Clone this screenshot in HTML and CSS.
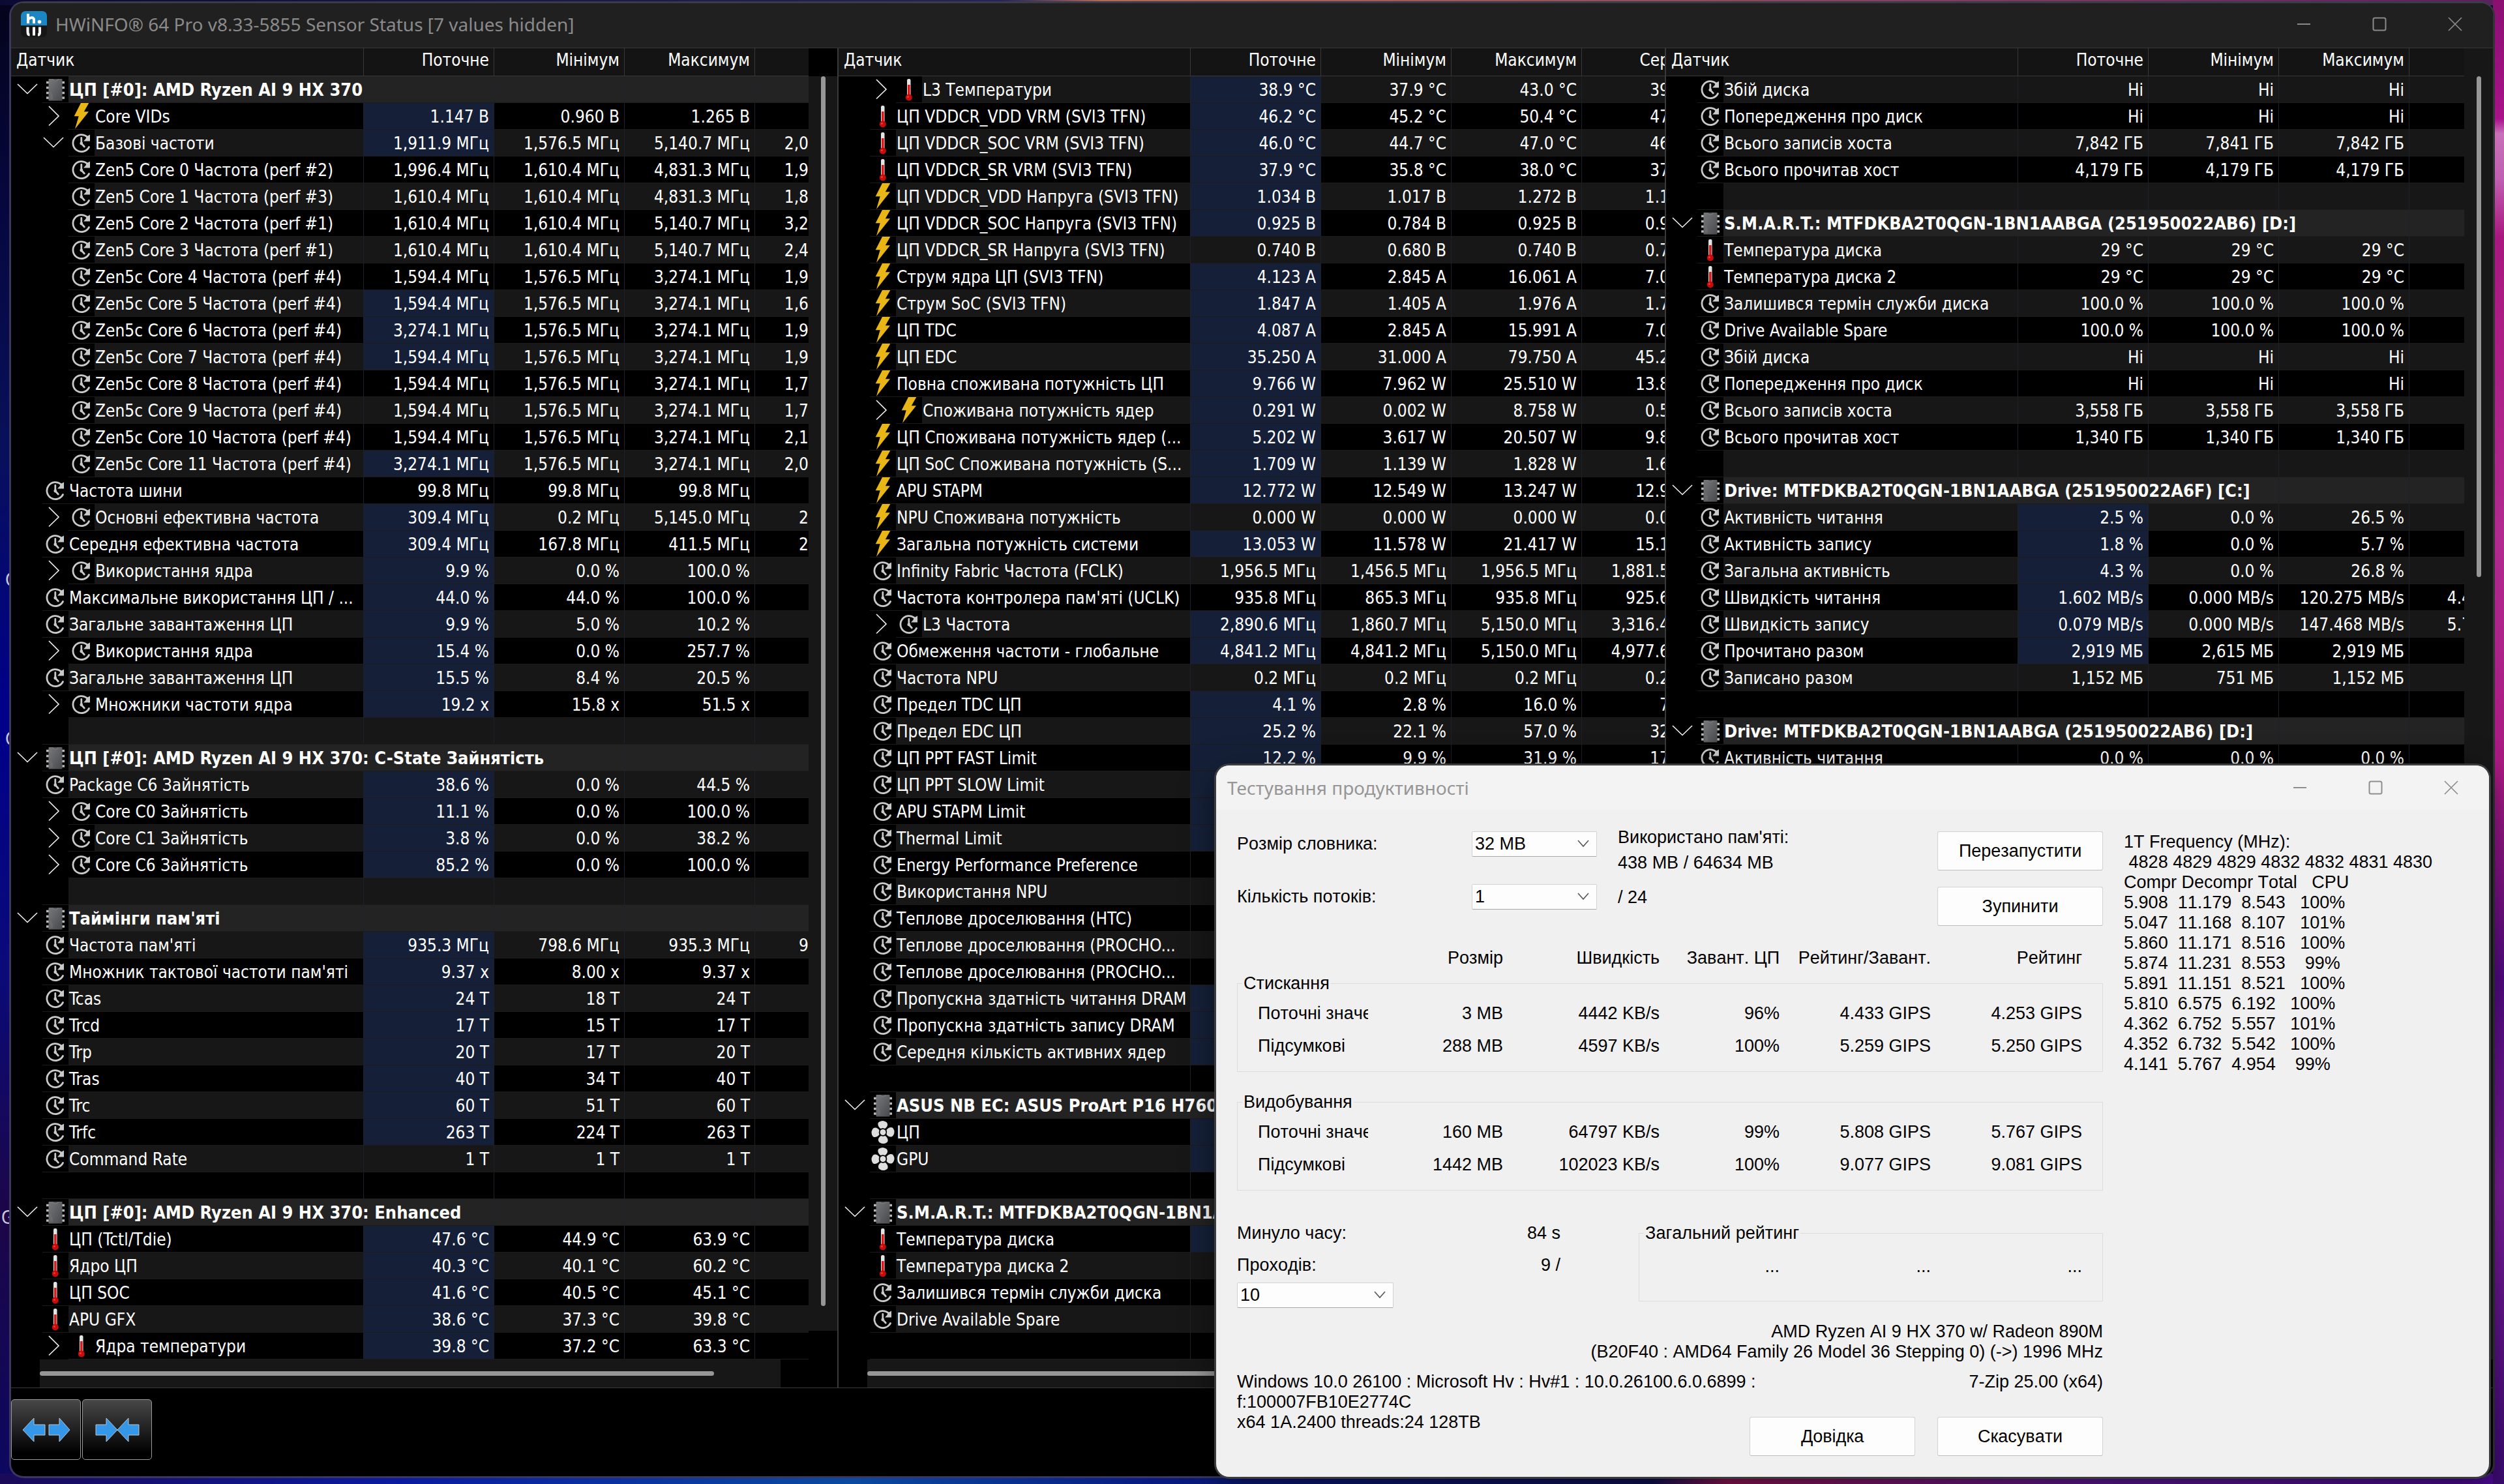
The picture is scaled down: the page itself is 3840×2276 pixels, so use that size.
FILE: index.html
```html
<!DOCTYPE html>
<html lang="uk">
<head>
<meta charset="utf-8">
<title>HWiNFO® 64 Pro</title>
<link rel="stylesheet" href="styles.css">
</head>
<body>
<svg class="sprite" aria-hidden="true">
  <defs>
    <linearGradient id="chip-body" x1="0" y1="0" x2="1" y2="1">
      <stop offset="0" stop-color="#77787b"/><stop offset="1" stop-color="#48494c"/>
    </linearGradient>
  </defs>
  <symbol id="clock" viewBox="0 0 40 40">
    <path d="M28.500 10.800A13 13 0 1 0 31.500 26.500" fill="none" stroke="#c9c9c9" stroke-width="2.800" stroke-linecap="round"/>
    <path d="M33 7.500v10h-10l3.500-3.800 1-3.200z" fill="#c9c9c9"/>
    <path d="M19.800 12.500V21l4.500 5" fill="none" stroke="#c9c9c9" stroke-width="2.800" stroke-linecap="round"/>
    <circle cx="19.800" cy="21" r="2.400" fill="#c9c9c9"/>
  </symbol>
  <symbol id="chip" viewBox="0 0 40 40">
    <path d="M6 9.500h28M6 17.500h28M6 25.500h28M6 33h28" stroke="#b9b9b9" stroke-width="3.600"/>
    <rect x="9.500" y="4" width="21" height="33.500" rx="1" fill="url(#chip-body)"/>
    <path d="M16 4a4 3 0 0 0 8 0" fill="#5a5a5c" stroke="#8c8c8c" stroke-width=".7"/>
    <path d="M13 24v11M15 28v7" stroke="#7b7b7e" stroke-width=".7"/>
  </symbol>
  <symbol id="bolt" viewBox="0 0 40 40">
    <path d="M19 0h12.300l-7.500 13.300h7.200L10 39.700l5.700-19.400h-7z" fill="#e9b616"/>
  </symbol>
  <symbol id="temp" viewBox="0 0 40 40">
    <rect x="17" y="4" width="5.500" height="26" rx="2.200" fill="#e4e4e4"/>
    <rect x="18" y="13" width="3.600" height="18" fill="#e01818"/>
    <circle cx="19.800" cy="32.500" r="5" fill="#c80c0c"/>
    <circle cx="18.400" cy="31.500" r="1.500" fill="#ef3a3a"/>
  </symbol>
  <symbol id="fan" viewBox="0 0 40 40">
    <g fill="#dedede">
      <path id="blade" d="M16.500 15C12 12 11 6 14.500 4.500q5-3 10 0C29 7 27 13 23 15q-3-1.500-6.500 0z"/>
      <use href="#blade" transform="rotate(90 20 20.500)"/>
      <use href="#blade" transform="rotate(180 20 20.500)"/>
      <use href="#blade" transform="rotate(270 20 20.500)"/>
      <circle cx="20" cy="20.500" r="4.500"/>
    </g>
  </symbol>
  <symbol id="open" viewBox="0 0 40 40">
    <path d="M5 12l15 14.500L35 12" fill="none" stroke="#f2f2f2" stroke-width="1.600"/>
  </symbol>
  <symbol id="closed" viewBox="0 0 40 40">
    <path d="M13 5l15 15-15 14.500" fill="none" stroke="#f2f2f2" stroke-width="1.600"/>
  </symbol>
  <symbol id="win-min" viewBox="0 0 24 24"><path d="M2 12h20" stroke="currentColor" stroke-width="2"/></symbol>
  <symbol id="win-max" viewBox="0 0 24 24"><rect x="2.500" y="2.500" width="19" height="19" rx="2.500" fill="none" stroke="currentColor" stroke-width="2"/></symbol>
  <symbol id="win-close" viewBox="0 0 24 24"><path d="M2 2l20 20M22 2L2 22" stroke="currentColor" stroke-width="1.700"/></symbol>
  <symbol id="drop" viewBox="0 0 20 20"><path d="M2 5l8 9 8-9" fill="none" stroke="#555" stroke-width="1.600"/></symbol>
</svg>

<main class="desktop">
  <span class="shortcut shortcut-a">G</span>
  <span class="shortcut shortcut-b">G</span>
  <span class="shortcut shortcut-c">G</span>

  <section class="monitor">
    <header class="titlebar">
      <svg class="logo" viewBox="0 0 40 40" aria-hidden="true">
        <rect width="40" height="40" rx="7" fill="#161616"/>
        <path d="M7 0h26a7 7 0 0 1 7 7v15H0V7a7 7 0 0 1 7-7z" fill="#1a86c4"/>
        <path d="M11 4v15M11 12.500q7-5 9 0V19" fill="none" stroke="#fff" stroke-width="4"/>
        <circle cx="28.500" cy="16.500" r="2.800" fill="#fff"/>
        <path d="M10.500 24.500v7q0 5 3 5M20 24.500v13M29 24.500v8q0 4-3 4" fill="none" stroke="#fff" stroke-width="4"/>
      </svg>
      <h1>HWiNFO® 64 Pro v8.33-5855 Sensor Status [7 values hidden]</h1>
      <div class="window-buttons">
        <button type="button" aria-label="Згорнути"><svg><use href="#win-min"/></svg></button>
        <button type="button" aria-label="Розгорнути"><svg><use href="#win-max"/></svg></button>
        <button type="button" aria-label="Закрити"><svg><use href="#win-close"/></svg></button>
      </div>
    </header>

    <div class="panels">
      <section class="panel panel-one">
        <div class="viewport"><table class="sensors" id="sensors-one"></table></div>
        <div class="vbar"><i></i></div>
        <div class="hbar"><i></i></div>
      </section>
      <section class="panel panel-two">
        <div class="viewport"><table class="sensors" id="sensors-two"></table></div>
        <div class="hbar"><i></i></div>
      </section>
      <section class="panel panel-three">
        <div class="viewport"><table class="sensors" id="sensors-three"></table></div>
        <div class="vbar"><i></i></div>
      </section>
    </div>

    <footer class="toolbar">
      <button type="button" aria-label="Розширити">
        <svg viewBox="0 0 74 38"><path d="M1 19L18 1v10h17v16H18v10zM73 19L57 1v10H41v16h16v10z"/></svg>
      </button>
      <button type="button" aria-label="Звузити">
        <svg viewBox="0 0 74 38"><path d="M37 19L20 1v10H4v16h16v10zM37 19L54 1v10h16v16H54v10z"/></svg>
      </button>
    </footer>
  </section>

  <section class="bench">
    <header class="bench-title">
      <h2>Тестування продуктивності</h2>
      <div class="window-buttons">
        <button type="button" aria-label="Згорнути"><svg><use href="#win-min"/></svg></button>
        <button type="button" aria-label="Розгорнути"><svg><use href="#win-max"/></svg></button>
        <button type="button" aria-label="Закрити"><svg><use href="#win-close"/></svg></button>
      </div>
    </header>
    <div class="bench-body">
      <div class="form">
        <div class="settings">
          <div class="fields">
            <label for="dict">Розмір словника:</label>
            <span class="combo"><select id="dict"><option>32 MB</option></select><svg><use href="#drop"/></svg></span>
            <label for="threads">Кількість потоків:</label>
            <span class="combo"><select id="threads"><option>1</option></select><svg><use href="#drop"/></svg></span>
          </div>
          <div class="memory">
            <span>Використано пам'яті:</span>
            <span>438 MB / 64634 MB</span>
            <span class="total-threads">/ 24</span>
          </div>
          <div class="run-buttons">
            <button type="button">Перезапустити</button>
            <button type="button">Зупинити</button>
          </div>
        </div>

        <div class="result-heads">
          <span></span><span>Розмір</span><span>Швидкість</span><span>Завант. ЦП</span><span>Рейтинг/Завант.</span><span>Рейтинг</span>
        </div>
        <fieldset>
          <legend>Стискання</legend>
          <table class="results">
            <colgroup><col class="c-name"><col class="c-size"><col class="c-speed"><col class="c-load"><col class="c-rate"><col class="c-rate"><col></colgroup>
            <tr><th scope="row">Поточні значення</th><td>3 MB</td><td>4442 KB/s</td><td>96%</td><td>4.433 GIPS</td><td>4.253 GIPS</td><td></td></tr>
            <tr><th scope="row">Підсумкові</th><td>288 MB</td><td>4597 KB/s</td><td>100%</td><td>5.259 GIPS</td><td>5.250 GIPS</td><td></td></tr>
          </table>
        </fieldset>
        <fieldset class="second">
          <legend>Видобування</legend>
          <table class="results">
            <colgroup><col class="c-name"><col class="c-size"><col class="c-speed"><col class="c-load"><col class="c-rate"><col class="c-rate"><col></colgroup>
            <tr><th scope="row">Поточні значення</th><td>160 MB</td><td>64797 KB/s</td><td>99%</td><td>5.808 GIPS</td><td>5.767 GIPS</td><td></td></tr>
            <tr><th scope="row">Підсумкові</th><td>1442 MB</td><td>102023 KB/s</td><td>100%</td><td>9.077 GIPS</td><td>9.081 GIPS</td><td></td></tr>
          </table>
        </fieldset>

        <div class="progress">
          <div class="passes">
            <p><span>Минуло часу:</span><span>84 s</span></p>
            <p><label for="passes">Проходів:</label><span>9 /</span></p>
            <span class="combo wide"><select id="passes"><option>10</option></select><svg><use href="#drop"/></svg></span>
          </div>
          <fieldset class="overall">
            <legend>Загальний рейтинг</legend>
            <div class="dots"><span>...</span><span>...</span><span>...</span></div>
          </fieldset>
        </div>

        <p class="cpu">AMD Ryzen AI 9 HX 370 w/ Radeon 890M<br>(B20F40 : AMD64 Family 26 Model 36 Stepping 0) (-&gt;) 1996 MHz</p>
        <div class="system">
          <p class="os">Windows 10.0 26100 : Microsoft Hv : Hv#1 : 10.0.26100.6.0.6899 :<br>f:100007FB10E2774C<br>x64 1A.2400 threads:24 128TB</p>
          <div class="finish">
            <p>7-Zip 25.00 (x64)</p>
            <div class="finish-buttons">
              <button type="button">Довідка</button>
              <button type="button">Скасувати</button>
            </div>
          </div>
        </div>
      </div>
      <pre class="log">1T Frequency (MHz):
 4828 4829 4829 4832 4832 4831 4830
Compr Decompr Total   CPU
5.908  11.179  8.543   100%
5.047  11.168  8.107   101%
5.860  11.171  8.516   100%
5.874  11.231  8.553    99%
5.891  11.151  8.521   100%
5.810  6.575  6.192   100%
4.362  6.752  5.557   101%
4.352  6.732  5.542   100%
4.141  5.767  4.954    99%</pre>
    </div>
  </section>
</main>
<script src="sensors.js"></script>
</body>
</html>
```
FILE: styles.css
```css
* { box-sizing: border-box; }

html, body { height: 100%; }

body {
  margin: 0;
  overflow: hidden;
  background: #05052e;
  color: #fff;
  font: 26px/38px "DejaVu Sans Condensed", "DejaVu Sans", sans-serif;
}

h1, h2, p, pre { margin: 0; font-weight: 400; }

button, select { font: inherit; color: inherit; }

.sprite { position: absolute; width: 0; height: 0; }

/* Desktop: coloured wallpaper strips round the window */
.desktop {
  position: relative;
  height: 100%;
  background:
    linear-gradient(#8a1070, #a8128a 8%, #c870b8 9%, #c060b0 12%, #a8187e 16%, #b02a90 36%, #a81a80 52%, #500a80 66%, #7a1c98 80%, #3a0a70) right / 17px 100% no-repeat,
    linear-gradient(90deg, #0a0a34, #24245c 40%, #b06a58 44%, #8a4a5c 70%, #5a2060) top / 100% 8px no-repeat,
    linear-gradient(90deg, #1a0a58, #0a1aa0 16%, #0a4aa0 34%, #081a80 46%, #101050 66%, #8a1450 69%, #5a1890 84%, #4a0a90) bottom / 100% 16px no-repeat,
    linear-gradient(#04041c, #06063a 12%, #08105a 30%, #00008a 48%, #0a0a7a 65%, #1c0648 82%, #0c0860) left / 40px 100% no-repeat;
}

.shortcut { position: absolute; left: 8px; color: #c8c8d8; font-size: 28px; }
.shortcut-a { top: 871px; }
.shortcut-b { top: 1115px; }
.shortcut-c { top: 1849px; left: 2px; }

/* Sensor window */
.monitor {
  position: absolute;
  z-index: 0;
  inset: 2px 14px 9px 14px;
  display: flex;
  flex-direction: column;
  border: 3px solid #3a365c;
  border-top-color: #3c3a48;
  border-right-color: #35323c;
  border-radius: 22px;
  background: #000;
  overflow: hidden;
}

.titlebar {
  display: flex;
  align-items: center;
  height: 69px;
  flex: none;
  padding: 0 46px 4px 15px;
  background: #202020;
  border-bottom: 1px solid #383838;
  color: #8a8a8a;
}
.titlebar h1, .bench-title h2 {
  font: 28px/40px "Noto Sans", sans-serif;
}
.logo { width: 40px; height: 40px; margin-right: 13px; }

.window-buttons { display: flex; gap: 92px; margin-left: auto; color: #8a8a8a; }
.window-buttons button {
  width: 24px; height: 24px; padding: 0; border: 0; background: none;
}
.window-buttons svg { display: block; width: 24px; height: 24px; }

.panels {
  display: grid;
  grid-template-columns: 1267fr 1269fr 1270fr;
  border-bottom: 1px solid #383838;
}

.panel {
  display: grid;
  grid-template-columns: minmax(0, 1fr) auto;
  grid-template-rows: auto 43px;
  min-width: 0;
  overflow: hidden;
  background: #000;
}
.panel + .panel { border-left: 2px solid #3a3a3a; }

.viewport { overflow: hidden; }

.vbar {
  width: 44px;
  margin: 43px 0 44px;
  background: #171717;
}
.vbar i {
  display: block;
  width: 7px;
  height: 98%;
  margin-left: 19px;
  border-radius: 4px;
  background: #979797;
}
.panel-three .vbar { margin: 0; padding-top: 43px; }
.panel-three .vbar i { height: 39%; }

.hbar {
  grid-column: 1 / -1;
  margin: 0 87px 0 44px;
  padding-top: 18px;
  background: #171717;
}
.hbar i {
  display: block;
  width: 91%;
  height: 7px;
  border-radius: 4px;
  background: #979797;
}
.panel-two .hbar { margin-right: 0; }

.sensors {
  width: 100%;
  table-layout: fixed;
  border-collapse: separate;
  border-spacing: 0;
}
.panel-two .sensors { width: calc(100% + 7px); }
.panel-three .sensors { width: calc(100% + 11px); }

.sensors .value-col { width: 200px; }
.sensors .cut-col { width: 82px; }
.panel-two .cut-col { width: 134px; }
.panel-three .cut-col { width: 95px; }

.sensors th, .sensors td { padding: 0; font-weight: 400; white-space: nowrap; }

.sensors thead th {
  height: 43px;
  padding: 0 7px 6px;
  background: #141414;
  border-right: 1px solid #383838;
  border-bottom: 1px solid #383838;
  line-height: 36px;
  text-align: right;
}
.sensors thead th:first-child { padding-left: 8px; text-align: left; }
.sensors thead th:last-child { padding-right: 0; border-right: 0; }

.sensors td {
  height: 41px;
  padding: 2px 7px 0 0;
  border-right: 1px solid #1b222b;
  border-bottom: 1px solid #1b1b1b;
  text-align: right;
}
.sensors td:last-child { padding-right: 0; border-right: 0; }
.sensors tbody tr:nth-child(odd) td,
.sensors tbody tr:nth-child(odd) .label { background: #171717; }
.sensors tbody tr td.live { background: #152038; }

.node { display: flex; height: 41px; }
.nested .node { padding-left: 40px; }
.node .arrow { width: 48px; flex: none; }
.node .arrow svg { display: block; width: 40px; height: 40px; margin-left: 5px; }
.node .icon { width: 40px; flex: none; border-bottom: 1px solid #1b1b1b; }
.node .icon svg { display: block; width: 40px; height: 40px; }
.node .label {
  flex: 1;
  min-width: 0;
  padding: 2px 0 0 1px;
  border-right: 1px solid #1b222b;
  border-bottom: 1px solid #1b1b1b;
  text-align: left;
}

.sensors tbody tr.group td,
.sensors tbody tr.group .label { background: #232323; }
.group .label b {
  position: relative;
  z-index: 1;
  display: inline-block;
  line-height: 32px;
  margin-top: 3px;
  font-size: 27px;
  background: #232323;
}

.toolbar { display: flex; gap: 2px; padding-top: 17px; }
.toolbar button {
  width: 107px;
  height: 93px;
  padding: 0;
  border: 1px solid #9a9a9a;
  border-radius: 5px;
  background: linear-gradient(#474747, #1c1c1c 55%, #000 90%);
}
.toolbar svg { display: block; width: 74px; height: 38px; margin: 0 auto; }
.toolbar path { fill: #3497e8; stroke: #b9c4cc; stroke-width: 1; }

/* Benchmark dialog */
.bench {
  position: absolute;
  z-index: 1;
  top: 1174px;
  left: 48.57%;
  right: 23px;
  border-radius: 20px;
  background: #f0f0f0;
  box-shadow: 0 0 0 3px #3c3c3e, 0 12px 50px rgba(0, 0, 0, .5);
  color: #000;
  font: 27px/31px "Liberation Sans", Arial, sans-serif;
  font-kerning: none;
}
.bench-title {
  display: flex;
  align-items: center;
  height: 68px;
  padding: 0 46px 0 17px;
  border-radius: 20px 20px 0 0;
  background: #f3f3f3;
  color: #969696;
}
.bench .window-buttons { gap: 92px; color: #8e8e8e; }

.bench-body { display: flex; gap: 32px; padding: 27px 32px 32px; }
.form { width: 1328px; flex: none; }

.settings { display: flex; }
.fields {
  display: grid;
  grid-template-columns: 360px 192px;
  grid-auto-rows: 39px;
  row-gap: 42px;
  align-items: center;
  margin: 6px 32px 0 0;
}
.memory { display: flex; flex-direction: column; gap: 8px; }
.memory .total-threads { margin-top: 14px; }
.run-buttons { display: flex; flex-direction: column; gap: 25px; margin-left: auto; padding-top: 6px; }

.bench-body button {
  width: 254px;
  height: 60px;
  padding: 0;
  border: 1px solid #d2d2d2;
  border-bottom-color: #bdbdbd;
  border-radius: 3px;
  background: #fdfdfd;
}

.combo { position: relative; display: block; height: 39px; }
.combo.wide { width: 240px; margin-top: -7px; }
.combo select {
  appearance: none;
  width: 100%;
  height: 39px;
  padding: 0 0 0 4px;
  border: 1px solid #d2d2d2;
  border-bottom-color: #a8a8a8;
  border-radius: 2px;
  background: #fdfdfd;
}
.combo svg {
  position: absolute;
  top: 9px;
  right: 11px;
  width: 20px;
  height: 20px;
  pointer-events: none;
}

.result-heads {
  display: grid;
  grid-template-columns: 200px 208px 240px 184px 232px 232px;
  margin: 34px 0 8px;
  text-align: right;
  white-space: nowrap;
}

fieldset {
  min-width: 0;
  margin: 0;
  padding: 5px 0 14px;
  border: 1px solid #dcdcdc;
}
fieldset.second { margin-top: 31px; }
legend { margin-left: 7px; padding: 0 2px; }

.results { width: 100%; table-layout: fixed; border-spacing: 0; }
.results th, .results td { height: 50px; padding: 0; text-align: right; font-weight: 400; white-space: nowrap; }
.results th { padding-left: 31px; overflow: hidden; text-align: left; }
.c-name { width: 200px; }
.c-size { width: 207px; }
.c-speed { width: 240px; }
.c-load { width: 184px; }
.c-rate { width: 232px; }

.progress { display: flex; gap: 120px; margin-top: 50px; }
.passes { display: flex; flex-direction: column; gap: 18px; width: 496px; }
.passes p { display: flex; justify-content: space-between; }
.overall { flex: 1; height: 120px; }
.dots {
  display: grid;
  grid-template-columns: 215px 232px 232px;
  padding-top: 15px;
  text-align: right;
}

.cpu { margin-top: 21px; text-align: right; }
.system { display: flex; justify-content: space-between; margin-top: 15px; }
.os { white-space: nowrap; }
.finish { text-align: right; }
.finish > p { white-space: nowrap; }
.finish-buttons { display: flex; gap: 34px; margin-top: 38px; }
.system .finish { margin-left: -34px; }

.log { font: inherit; padding-top: 7px; }
```
FILE: sensors.js
```js
// Row: kind|name|current|min|max|average|live
// An empty line is a spacer. Kind is "G" for a sensor group, otherwise
// an icon letter (c clock, b bolt, t temperature, f fan), then "2" for a
// nested row, then ">" collapsed or "v" expanded.
const HEADS = ["Датчик", "Поточне", "Мінімум", "Максимум"];
const ICONS = { c: "clock", b: "bolt", t: "temp", f: "fan", G: "chip" };

const ONE = `
G|ЦП [#0]: AMD Ryzen AI 9 HX 370
b2>|Core VIDs|1.147 В|0.960 В|1.265 В||*
c2v|Базові частоти|1,911.9 МГц|1,576.5 МГц|5,140.7 МГц|2,0|*
c2|Zen5 Core 0 Частота (perf #2)|1,996.4 МГц|1,610.4 МГц|4,831.3 МГц|1,9
c2|Zen5 Core 1 Частота (perf #3)|1,610.4 МГц|1,610.4 МГц|4,831.3 МГц|1,8
c2|Zen5 Core 2 Частота (perf #1)|1,610.4 МГц|1,610.4 МГц|5,140.7 МГц|3,2
c2|Zen5 Core 3 Частота (perf #1)|1,610.4 МГц|1,610.4 МГц|5,140.7 МГц|2,4
c2|Zen5c Core 4 Частота (perf #4)|1,594.4 МГц|1,576.5 МГц|3,274.1 МГц|1,9
c2|Zen5c Core 5 Частота (perf #4)|1,594.4 МГц|1,576.5 МГц|3,274.1 МГц|1,6|*
c2|Zen5c Core 6 Частота (perf #4)|3,274.1 МГц|1,576.5 МГц|3,274.1 МГц|1,9|*
c2|Zen5c Core 7 Частота (perf #4)|1,594.4 МГц|1,576.5 МГц|3,274.1 МГц|1,9|*
c2|Zen5c Core 8 Частота (perf #4)|1,594.4 МГц|1,576.5 МГц|3,274.1 МГц|1,7
c2|Zen5c Core 9 Частота (perf #4)|1,594.4 МГц|1,576.5 МГц|3,274.1 МГц|1,7
c2|Zen5c Core 10 Частота (perf #4)|1,594.4 МГц|1,576.5 МГц|3,274.1 МГц|2,1
c2|Zen5c Core 11 Частота (perf #4)|3,274.1 МГц|1,576.5 МГц|3,274.1 МГц|2,0|*
c|Частота шини|99.8 МГц|99.8 МГц|99.8 МГц
c2>|Основні ефективна частота|309.4 МГц|0.2 МГц|5,145.0 МГц|2|*
c|Середня ефективна частота|309.4 МГц|167.8 МГц|411.5 МГц|2|*
c2>|Використання ядра|9.9 %|0.0 %|100.0 %||*
c|Максимальне використання ЦП / ...|44.0 %|44.0 %|100.0 %||*
c|Загальне завантаження ЦП|9.9 %|5.0 %|10.2 %||*
c2>|Використання ядра|15.4 %|0.0 %|257.7 %||*
c|Загальне завантаження ЦП|15.5 %|8.4 %|20.5 %||*
c2>|Множники частоти ядра|19.2 x|15.8 x|51.5 x||*

G|ЦП [#0]: AMD Ryzen AI 9 HX 370: C-State Зайнятість
c|Package C6 Зайнятість|38.6 %|0.0 %|44.5 %||*
c2>|Core C0 Зайнятість|11.1 %|0.0 %|100.0 %||*
c2>|Core C1 Зайнятість|3.8 %|0.0 %|38.2 %||*
c2>|Core C6 Зайнятість|85.2 %|0.0 %|100.0 %||*

G|Таймінги пам'яті
c|Частота пам'яті|935.3 МГц|798.6 МГц|935.3 МГц|9|*
c|Множник тактової частоти пам'яті|9.37 x|8.00 x|9.37 x||*
c|Tcas|24 T|18 T|24 T||*
c|Trcd|17 T|15 T|17 T||*
c|Trp|20 T|17 T|20 T||*
c|Tras|40 T|34 T|40 T||*
c|Trc|60 T|51 T|60 T||*
c|Trfc|263 T|224 T|263 T||*
c|Command Rate|1 T|1 T|1 T

G|ЦП [#0]: AMD Ryzen AI 9 HX 370: Enhanced
t|ЦП (Tctl/Tdie)|47.6 °C|44.9 °C|63.9 °C||*
t|Ядро ЦП|40.3 °C|40.1 °C|60.2 °C||*
t|ЦП SOC|41.6 °C|40.5 °C|45.1 °C||*
t|APU GFX|38.6 °C|37.3 °C|39.8 °C||*
t2>|Ядра температури|39.8 °C|37.2 °C|63.3 °C||*`;

const TWO = `
t2>|L3 Температури|38.9 °C|37.9 °C|43.0 °C|39|*
t|ЦП VDDCR_VDD VRM (SVI3 TFN)|46.2 °C|45.2 °C|50.4 °C|47|*
t|ЦП VDDCR_SOC VRM (SVI3 TFN)|46.0 °C|44.7 °C|47.0 °C|46|*
t|ЦП VDDCR_SR VRM (SVI3 TFN)|37.9 °C|35.8 °C|38.0 °C|37|*
b|ЦП VDDCR_VDD Напруга (SVI3 TFN)|1.034 В|1.017 В|1.272 В|1.1|*
b|ЦП VDDCR_SOC Напруга (SVI3 TFN)|0.925 В|0.784 В|0.925 В|0.9|*
b|ЦП VDDCR_SR Напруга (SVI3 TFN)|0.740 В|0.680 В|0.740 В|0.7
b|Струм ядра ЦП (SVI3 TFN)|4.123 A|2.845 A|16.061 A|7.0|*
b|Струм SoC (SVI3 TFN)|1.847 A|1.405 A|1.976 A|1.7|*
b|ЦП TDC|4.087 A|2.845 A|15.991 A|7.0|*
b|ЦП EDC|35.250 A|31.000 A|79.750 A|45.2|*
b|Повна споживана потужність ЦП|9.766 W|7.962 W|25.510 W|13.8|*
b2>|Споживана потужність ядер|0.291 W|0.002 W|8.758 W|0.5|*
b|ЦП Споживана потужність ядер (...|5.202 W|3.617 W|20.507 W|9.8|*
b|ЦП SoC Споживана потужність (S...|1.709 W|1.139 W|1.828 W|1.6|*
b|APU STAPM|12.772 W|12.549 W|13.247 W|12.9|*
b|NPU Споживана потужність|0.000 W|0.000 W|0.000 W|0.0
b|Загальна потужність системи|13.053 W|11.578 W|21.417 W|15.1|*
c|Infinity Fabric Частота (FCLK)|1,956.5 МГц|1,456.5 МГц|1,956.5 МГц|1,881.5
c|Частота контролера пам'яті (UCLK)|935.8 МГц|865.3 МГц|935.8 МГц|925.6
c2>|L3 Частота|2,890.6 МГц|1,860.7 МГц|5,150.0 МГц|3,316.4|*
c|Обмеження частоти - глобальне|4,841.2 МГц|4,841.2 МГц|5,150.0 МГц|4,977.6|*
c|Частота NPU|0.2 МГц|0.2 МГц|0.2 МГц|0.2
c|Предел TDC ЦП|4.1 %|2.8 %|16.0 %|7|*
c|Предел EDC ЦП|25.2 %|22.1 %|57.0 %|32|*
c|ЦП PPT FAST Limit|12.2 %|9.9 %|31.9 %|17|*
c|ЦП PPT SLOW Limit|||||*
c|APU STAPM Limit|||||*
c|Thermal Limit|||||*
c|Energy Performance Preference
c|Використання NPU
c|Теплове дроселювання (HTC)
c|Теплове дроселювання (PROCHO...
c|Теплове дроселювання (PROCHO...
c|Пропускна здатність читання DRAM|||||*
c|Пропускна здатність запису DRAM|||||*
c|Середня кількість активних ядер|||||*

G|ASUS NB EC: ASUS ProArt P16 H760
f|ЦП|||||*
f|GPU|||||*

G|S.M.A.R.T.: MTFDKBA2T0QGN-1BN1A
t|Температура диска|||||*
t|Температура диска 2
c|Залишився термін служби диска
c|Drive Available Spare
`;

const THREE = `
c|Збій диска|Ні|Ні|Ні
c|Попередження про диск|Ні|Ні|Ні
c|Всього записів хоста|7,842 ГБ|7,841 ГБ|7,842 ГБ
c|Всього прочитав хост|4,179 ГБ|4,179 ГБ|4,179 ГБ

G|S.M.A.R.T.: MTFDKBA2T0QGN-1BN1AABGA (251950022AB6) [D:]
t|Температура диска|29 °C|29 °C|29 °C
t|Температура диска 2|29 °C|29 °C|29 °C
c|Залишився термін служби диска|100.0 %|100.0 %|100.0 %
c|Drive Available Spare|100.0 %|100.0 %|100.0 %
c|Збій диска|Ні|Ні|Ні
c|Попередження про диск|Ні|Ні|Ні
c|Всього записів хоста|3,558 ГБ|3,558 ГБ|3,558 ГБ
c|Всього прочитав хост|1,340 ГБ|1,340 ГБ|1,340 ГБ

G|Drive: MTFDKBA2T0QGN-1BN1AABGA (251950022A6F) [C:]
c|Активність читання|2.5 %|0.0 %|26.5 %||*
c|Активність запису|1.8 %|0.0 %|5.7 %||*
c|Загальна активність|4.3 %|0.0 %|26.8 %||*
c|Швидкість читання|1.602 MB/s|0.000 MB/s|120.275 MB/s|4.4|*
c|Швидкість запису|0.079 MB/s|0.000 MB/s|147.468 MB/s|5.7|*
c|Прочитано разом|2,919 МБ|2,615 МБ|2,919 МБ||*
c|Записано разом|1,152 МБ|751 МБ|1,152 МБ

G|Drive: MTFDKBA2T0QGN-1BN1AABGA (251950022AB6) [D:]
c|Активність читання|0.0 %|0.0 %|0.0 %`;

const icon = name => name ? `<svg aria-hidden="true"><use href="#${name}"/></svg>` : "";

function rowHtml(line) {
  const [kind, name = "", now = "", min = "", max = "", avg = "", live] = line.split("|");
  const group = kind === "G";
  const arrow = group || kind.includes("v") ? "open" : kind.includes(">") ? "closed" : "";
  const cls = [group && "group", kind.includes("2") && "nested"].filter(Boolean).join(" ");
  return `<tr class="${cls}"><th scope="row"><div class="node">` +
    `<span class="arrow">${icon(arrow)}</span><span class="icon">${icon(ICONS[kind[0]])}</span>` +
    `<span class="label">${group ? `<b>${name}</b>` : name}</span></div></th>` +
    `<td${live ? ' class="live"' : ""}>${now}</td><td>${min}</td><td>${max}</td><td>${avg}</td></tr>`;
}

function fill(id, text, lastHead) {
  document.getElementById(id).innerHTML =
    `<colgroup><col><col class="value-col"><col class="value-col"><col class="value-col"><col class="cut-col"></colgroup>` +
    `<thead><tr>${[...HEADS, lastHead].map(h => `<th scope="col">${h}</th>`).join("")}</tr></thead>` +
    `<tbody>${text.slice(1).split("\n").map(rowHtml).join("")}</tbody>`;
}

fill("sensors-one", ONE, "");
fill("sensors-two", TWO, "Сер");
fill("sensors-three", THREE, "");
```
